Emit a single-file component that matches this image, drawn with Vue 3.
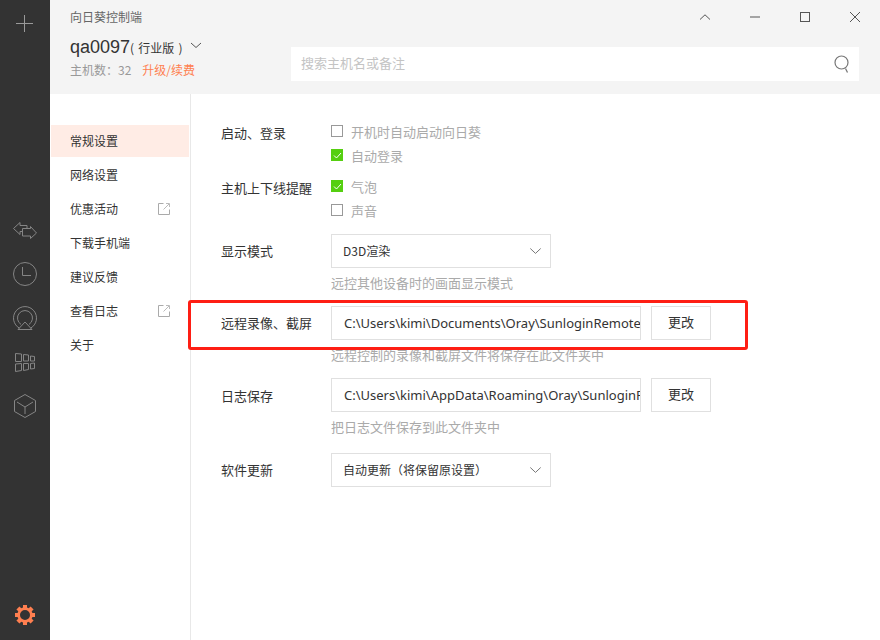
<script setup>
const nav = [
  { t: '常规设置', active: true },
  { t: '网络设置' },
  { t: '优惠活动', ext: true },
  { t: '下载手机端' },
  { t: '建议反馈' },
  { t: '查看日志', ext: true },
  { t: '关于' },
]
</script>

<template>
  <div class="app">
    <aside class="rail">
      <svg class="plus" width="17" height="17" viewBox="0 0 17 17"><path d="M8.500 0V17M0 8.500H17" stroke="#9a9a9a" fill="none"/></svg>
      <div class="rail-icons">
        <div class="slot"><svg width="24" height="17" viewBox="0 0 24 17" fill="none" stroke="#858585"><path d="M14 7V3.500H7V.5L.5 6.500L7 12.500V9.500H9.500"/><path d="M9.500 6.500H17.500V4.500L23.500 11L17.500 16.500V14H9.500Z"/></svg></div>
        <div class="slot"><svg width="24" height="24" viewBox="0 0 24 24" fill="none" stroke="#858585"><circle cx="12" cy="12" r="11.500"/><path d="M9.500 5V13.500H18"/></svg></div>
        <div class="slot"><svg width="24" height="24" viewBox="0 0 24 24" fill="none" stroke="#858585"><path d="M6.500 22.200A11.500 11.500 0 1 1 17.500 22.200"/><path d="M8 18.400A7.500 7.500 0 1 1 16 18.400"/><path d="M12 16L19 23.500H5Z"/></svg></div>
        <div class="slot"><svg width="20" height="19" viewBox="0 0 20 19" fill="none" stroke="#858585"><path d="M.5 .5L6.500 1V8.500H.5Z"/><path d="M8.500 1.500L13.500 2V8H8.500Z"/><path d="M15.500 3L19.500 3.500V8H15.500Z"/><path d="M.5 11L6.500 10.500V17.500L.5 18.500Z"/><path d="M8.500 10.500H13.500V16.500L8.500 17.500Z"/><path d="M15.500 10.500L19.500 10V15.500L15.500 16Z"/></svg></div>
        <div class="slot"><svg width="22" height="24" viewBox="0 0 22 24" fill="none" stroke="#858585"><path d="M11 .5L21.500 6.500V17.500L11 23.500L.5 17.500V6.500Z"/><path d="M3 8L11 13L19 8M11 13V20"/></svg></div>
      </div>
      <svg class="gear" width="20" height="20" viewBox="0 0 20 20"><path fill="#ff7f50" fill-rule="evenodd" d="M8 0h4v2.600l1.700.7 1.900-1.900 3 3-1.900 1.900.7 1.700H20v4h-2.600l-.7 1.700 1.900 1.900-3 3-1.900-1.900-1.700.7V20H8v-2.600l-1.700-.7-1.900 1.900-3-3 1.900-1.900-.7-1.700H0V8h2.600l.7-1.700-1.900-1.900 3-3 1.900 1.900L8 2.600ZM10 5a5 5 0 1 0 0 10 5 5 0 0 0 0-10Z"/></svg>
    </aside>

    <div class="main">
      <header class="head">
        <div class="head-left">
          <div class="app-name">向日葵控制端</div>
          <div class="account">
            <span class="acc-name">qa0097</span><span class="acc-tier">( 行业版 )</span>
            <svg class="acc-caret" width="12" height="7" viewBox="0 0 12 7" fill="none" stroke="#555"><path d="M1 1L6 5.500L11 1"/></svg>
          </div>
          <div class="hosts">主机数：32<a class="upgrade">升级/续费</a></div>
        </div>
        <div class="head-right">
          <div class="win">
            <svg width="10" height="6" viewBox="0 0 10 6" fill="none" stroke="#555"><path d="M0 5.500L5 .8L10 5.500"/></svg>
            <svg width="10" height="2" viewBox="0 0 10 2" fill="none" stroke="#555"><path d="M0 1H10"/></svg>
            <svg width="10" height="10" viewBox="0 0 10 10" fill="none" stroke="#555"><rect x=".5" y=".5" width="9" height="9"/></svg>
            <svg width="10" height="10" viewBox="0 0 10 10" fill="none" stroke="#555"><path d="M0 0L10 10M10 0L0 10"/></svg>
          </div>
          <div class="search">
            <span class="search-ph">搜索主机名或备注</span>
            <svg class="search-ic" width="16" height="18" viewBox="0 0 16 18" fill="none" stroke="#777" stroke-width="1.200"><circle cx="7.500" cy="7.500" r="6.500"/><path d="M11.500 13.500L13.500 17.500"/></svg>
          </div>
        </div>
      </header>

      <div class="body">
        <nav class="nav">
          <div v-for="n in nav" :key="n.t" class="nav-item" :class="{ active: n.active }">
            <span>{{ n.t }}</span>
            <svg v-if="n.ext" class="ext" width="12" height="12" viewBox="0 0 12 12" fill="none" stroke="#aaa"><path d="M5.500 .5H.5V11.500H11.500V6.500"/><path d="M5.500 6.500L11 1M8 .5H11.500V4" stroke="#bbb"/></svg>
          </div>
        </nav>

        <section class="content">
          <div class="row r-start">
            <div class="label">启动、登录</div>
            <div class="checks">
              <label class="check"><i class="box"></i>开机时自动启动向日葵</label>
              <label class="check"><i class="box on"><svg width="9" height="7" viewBox="0 0 9 7" fill="none" stroke="#fff"><path d="M1 3.500L3.500 6L8 1"/></svg></i>自动登录</label>
            </div>
          </div>
          <div class="row r-notify">
            <div class="label">主机上下线提醒</div>
            <div class="checks">
              <label class="check"><i class="box on"><svg width="9" height="7" viewBox="0 0 9 7" fill="none" stroke="#fff"><path d="M1 3.500L3.500 6L8 1"/></svg></i>气泡</label>
              <label class="check"><i class="box"></i>声音</label>
            </div>
          </div>
          <div class="row r-mode">
            <div class="label">显示模式</div>
            <div class="col">
              <div class="select"><span>D3D渲染</span><svg width="11" height="6" viewBox="0 0 11 6" fill="none" stroke="#777"><path d="M.3 .5L5.500 5.400L10.700 .5"/></svg></div>
              <div class="hint">远控其他设备时的画面显示模式</div>
            </div>
          </div>
          <div class="row r-rec">
            <div class="label">远程录像、截屏</div>
            <div class="col">
              <div class="path-row">
                <div class="path">C:\Users\kimi\Documents\Oray\SunloginRemote</div>
                <button class="btn">更改</button>
              </div>
              <div class="hint">远程控制的录像和截屏文件将保存在此文件夹中</div>
            </div>
            <div class="mark"></div>
          </div>
          <div class="row r-log">
            <div class="label">日志保存</div>
            <div class="col">
              <div class="path-row">
                <div class="path">C:\Users\kimi\AppData\Roaming\Oray\SunloginR</div>
                <button class="btn">更改</button>
              </div>
              <div class="hint">把日志文件保存到此文件夹中</div>
            </div>
          </div>
          <div class="row r-up">
            <div class="label">软件更新</div>
            <div class="select"><span>自动更新（将保留原设置）</span><svg width="11" height="6" viewBox="0 0 11 6" fill="none" stroke="#777"><path d="M.3 .5L5.500 5.400L10.700 .5"/></svg></div>
          </div>
        </section>
      </div>
    </div>
  </div>
</template>

<style>
html, body { margin: 0; background: #fff; }
</style>

<style scoped>
.app { display: flex; width: 880px; height: 640px; overflow: hidden; font-family: "Noto Sans CJK SC", "Liberation Sans", sans-serif; font-size: 13px; color: #333; }
.rail { width: 50px; flex: none; background: #333; display: flex; flex-direction: column; align-items: center; }
.plus { margin: 15px 1px 0 0; }
.rail-icons { margin-top: 176px; display: flex; flex-direction: column; align-items: center; }
.slot { height: 44px; display: flex; align-items: center; justify-content: center; }
.gear { margin-top: auto; margin-bottom: 15px; }
.main { flex: 1; display: flex; flex-direction: column; min-width: 0; }
.head { height: 94px; flex: none; background: #f4f4f4; display: flex; justify-content: space-between; padding-left: 20px; }
.app-name { margin-top: 8px; font-size: 12px; line-height: 17px; color: #666; }
.account { display: flex; align-items: center; margin-top: 10px; height: 24px; }
.acc-name { font-family: "Liberation Sans", sans-serif; font-size: 18px; color: #333; }
.acc-tier { font-size: 12px; color: #333; word-spacing: 1.500px; }
.acc-caret { margin-left: 7px; margin-top: -3px; }
.hosts { font-size: 12px; margin-top: 2px; line-height: 17px; color: #999; }
.upgrade { margin-left: 11px; color: #ff7f50; }
.head-right { display: flex; flex-direction: column; align-items: flex-end; }
.win { display: flex; align-items: center; height: 34px; padding-right: 20px; gap: 40px; }
.search { width: 568px; height: 34px; margin-top: 13px; margin-right: 21px; background: #fff; display: flex; align-items: center; justify-content: space-between; box-sizing: border-box; padding: 0 9px 0 10px; }
.search-ph { color: #c4c4c4; font-size: 13px; margin-top: -3px; }
.search-ic { margin-top: -1px; }
.body { flex: 1; display: flex; min-height: 0; }
.nav { width: 140px; flex: none; box-sizing: content-box; border-right: 1px solid #e8e8e8; padding-top: 31px; }
.nav-item { height: 32px; margin: 0 1px 2px; box-sizing: border-box; padding: 0 19px 2px 19px; display: flex; align-items: center; justify-content: space-between; font-size: 12px; color: #333; }
.nav-item.active { background: #ffece5; }
.ext { margin-top: 2px; }
.content { flex: 1; padding-left: 30px; }
.row { display: flex; position: relative; }
.label { width: 110px; flex: none; color: #333; font-size: 13px; line-height: 18px; }
.checks { display: flex; flex-direction: column; gap: 6px; }
.check { display: flex; align-items: center; height: 18px; color: #aaa; font-size: 13px; }
.box { width: 12px; height: 12px; box-sizing: border-box; border: 1px solid #999; margin-right: 8px; display: flex; align-items: center; justify-content: center; }
.box.on { background: #55cf10; border-color: #55cf10; }
.r-start { padding-top: 28px; }
.r-start .label { padding-top: 2px; }
.r-notify { padding-top: 13px; }
.r-notify .label { padding-top: 2px; }
.r-mode { padding-top: 15px; }
.r-mode .label { padding-top: 8px; }
.col { display: flex; flex-direction: column; }
.select { width: 220px; height: 34px; box-sizing: border-box; border: 1px solid #e0e0e0; display: flex; align-items: center; justify-content: space-between; padding: 0 9px 0 11px; font-size: 12px; color: #333; }
.select span { margin-top: -2px; }
.hint { color: #aaa; font-size: 13px; line-height: 18px; margin-top: 6px; }
.r-rec { padding-top: 14px; }
.r-rec .label { padding-top: 8px; }
.path-row { display: flex; gap: 10px; }
.path { width: 310px; height: 34px; line-height: 32px; box-sizing: border-box; border: 1px solid #e0e0e0; padding: 0 0 0 12px; overflow: hidden; white-space: nowrap; font-family: "Noto Sans", "Liberation Sans", sans-serif; font-size: 13px; color: #333; }
.btn { width: 60px; height: 34px; box-sizing: border-box; border: 1px solid #e0e0e0; background: #fff; font: inherit; font-size: 13px; color: #333; padding: 0 0 4px; }
.mark { position: absolute; left: -33px; top: 8px; width: 560px; height: 50px; box-sizing: border-box; border: 3px solid #fe1e14; border-radius: 3px; pointer-events: none; }
.r-log { padding-top: 14px; }
.r-log .label { padding-top: 9px; }
.r-up { padding-top: 17px; }
.r-up .label { padding-top: 8px; }
</style>
